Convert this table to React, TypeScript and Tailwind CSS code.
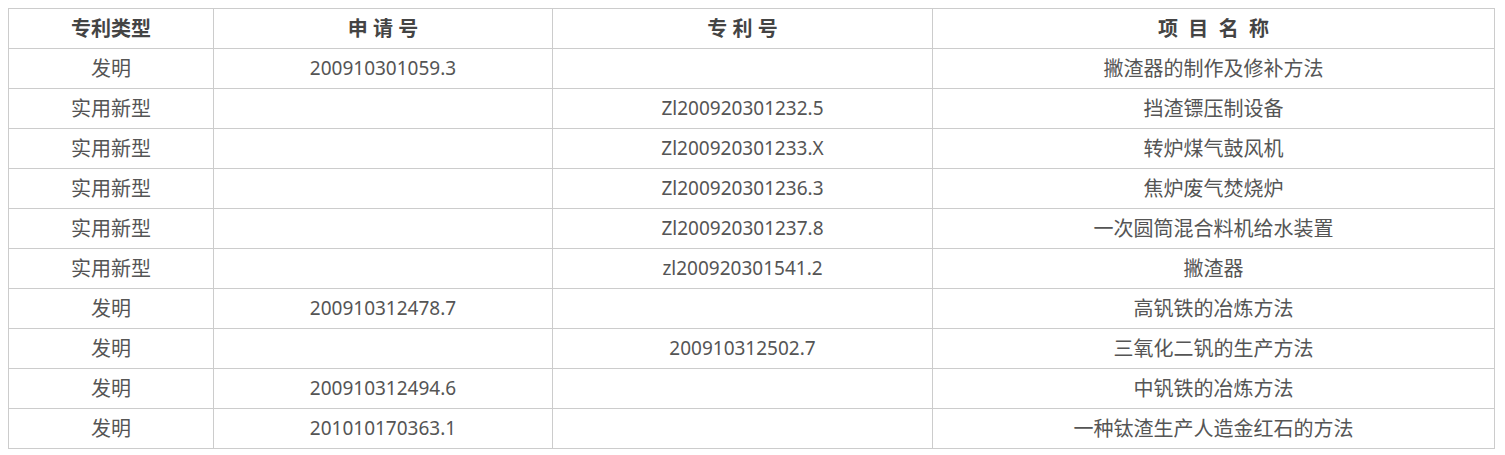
import React from "react"

interface Patent {
  type: string
  applyNo: string
  patentNo: string
  name: string
}

const patents: Patent[] = [
  { type: "发明", applyNo: "200910301059.3", patentNo: "", name: "撇渣器的制作及修补方法" },
  { type: "实用新型", applyNo: "", patentNo: "Zl200920301232.5", name: "挡渣镖压制设备" },
  { type: "实用新型", applyNo: "", patentNo: "Zl200920301233.X", name: "转炉煤气鼓风机" },
  { type: "实用新型", applyNo: "", patentNo: "Zl200920301236.3", name: "焦炉废气焚烧炉" },
  { type: "实用新型", applyNo: "", patentNo: "Zl200920301237.8", name: "一次圆筒混合料机给水装置" },
  { type: "实用新型", applyNo: "", patentNo: "zl200920301541.2", name: "撇渣器" },
  { type: "发明", applyNo: "200910312478.7", patentNo: "", name: "高钒铁的冶炼方法" },
  { type: "发明", applyNo: "", patentNo: "200910312502.7", name: "三氧化二钒的生产方法" },
  { type: "发明", applyNo: "200910312494.6", patentNo: "", name: "中钒铁的冶炼方法" },
  { type: "发明", applyNo: "201010170363.1", patentNo: "", name: "一种钛渣生产人造金红石的方法" },
]

const font = "font-['Noto_Sans','Noto_Sans_CJK_SC',sans-serif]"
const cell = "border border-[#cccccc] text-center p-0"
const head = "border border-[#cccccc] font-bold text-[#444] p-0"

export default function App() {
  return (
    <div className={`bg-white w-[1505px] h-[455px] pt-2 pl-2 ${font}`}>
      <table className="w-[1486px] border-collapse table-fixed text-[20px] text-[#555]">
        <colgroup>
          <col className="w-[205px]" />
          <col className="w-[339px]" />
          <col className="w-[380px]" />
          <col className="w-[562px]" />
        </colgroup>
        <thead>
          <tr className="h-10">
            <th className={head}>专利类型</th>
            <th className={head}>申 请 号</th>
            <th className={head}>专 利 号</th>
            <th className={head}>项&nbsp; 目&nbsp; 名&nbsp; 称</th>
          </tr>
        </thead>
        <tbody>
          {patents.map((p, i) => (
            <tr key={i} className="h-10">
              <td className={cell}>{p.type}</td>
              <td className={`${cell} text-[19px]`}>{p.applyNo}</td>
              <td className={`${cell} text-[19px]`}>{p.patentNo}</td>
              <td className={cell}>{p.name}</td>
            </tr>
          ))}
        </tbody>
      </table>
    </div>
  )
}
